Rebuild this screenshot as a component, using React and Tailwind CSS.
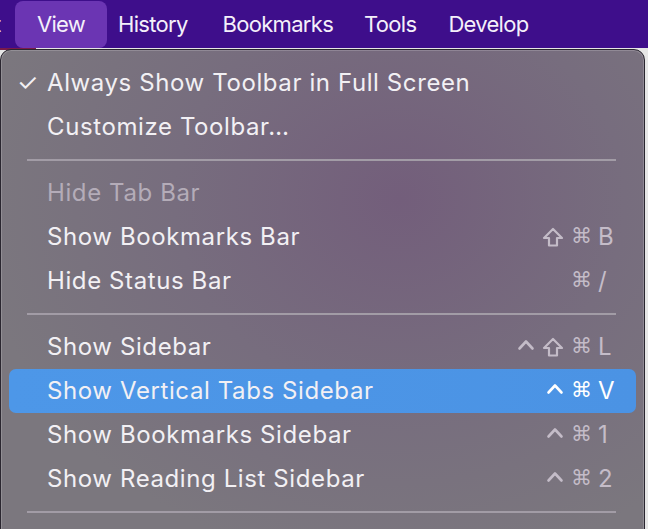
import React from "react";

const font = { fontFamily: "Inter, 'Noto Sans', 'DejaVu Sans', sans-serif" };
const sym = { fontFamily: "'DejaVu Sans', sans-serif" };

function ShiftIcon() {
  return (
    <svg width="22" height="20" viewBox="0 0 22 20" fill="none" stroke="currentColor" strokeWidth="2.2" strokeLinejoin="round">
      <path d="M11 2 L20 11 H15 V18.5 H7 V11 H2 Z" />
    </svg>
  );
}

function CaretIcon() {
  return (
    <svg width="18" height="20" viewBox="0 0 18 20" fill="none" stroke="currentColor" strokeWidth="2.6" strokeLinecap="round" strokeLinejoin="round">
      <path d="M2.5 11.5 L9 4.5 L15.5 11.5" />
    </svg>
  );
}

function Shortcut({ mods = [], k, active }) {
  return (
    <div className={`flex items-center ${active ? "text-white" : "text-[#c4bcc8]"}`}>
      <div className="flex items-center gap-[7px]">
        {mods.map((m, i) =>
          m === "^" ? (
            <CaretIcon key={i} />
          ) : m === "⇧" ? (
            <ShiftIcon key={i} />
          ) : (
            <span key={i} className="text-[21px]" style={sym}>
              {m}
            </span>
          )
        )}
      </div>
      <span className="w-[24px] pl-[6px] text-[24px]">{k}</span>
    </div>
  );
}

function Item({ label, check, disabled, active, sc }) {
  return (
    <div
      className={`h-[44px] mx-[8px] flex items-center rounded-[7px] ${
        active ? "bg-[linear-gradient(90deg,#4d97e8,#4b93e4)]" : ""
      }`}
    >
      <div className="w-[38px] pl-[8px] text-[24px] text-[#f2f0f4]">{check ? "✓" : ""}</div>
      <div
        className={`flex-1 text-[24px] tracking-[0.6px] ${
          disabled ? "text-[#b4acb8]" : "text-[#f2f0f4]"
        }`}
      >
        {label}
      </div>
      {sc && (
        <div className="pr-[20px]">
          <Shortcut {...sc} active={active} />
        </div>
      )}
    </div>
  );
}

function Sep() {
  return (
    <div className="h-[22px] flex items-center px-[26px] pr-[28px]">
      <div className="h-[2px] w-full bg-[#a29ca6]" />
    </div>
  );
}

export default function App() {
  return (
    <div className="w-[648px] h-[529px] overflow-hidden relative bg-[#e6e6e6]" style={font}>
      <div className="h-[48px] bg-[#3e0e8b] flex items-center text-[22px] tracking-[-0.7px] text-[#f4f0fa]">
        <span className="ml-[-6px] w-[21px]">t</span>
        <div className="h-[47px] w-[92px] rounded-[8px] bg-[#6b35b3] flex items-center justify-center">
          View
        </div>
        <span className="ml-[11px]">History</span>
        <span className="ml-[35px]">Bookmarks</span>
        <span className="ml-[31px]">Tools</span>
        <span className="ml-[32px]">Develop</span>
      </div>
      <div className="absolute left-0 top-[48px] h-[2px] w-[36px] bg-[#7a1a4a]" />
      <div className="absolute left-0 top-[49px] w-[645px] h-[500px] rounded-[11px] border border-[#2a2630] shadow-[inset_0_0_0_1px_rgba(255,255,255,0.18)] bg-[radial-gradient(ellipse_at_62%_30%,#735e7b_0%,#776d7e_40%,#7b777e_75%)]">
        <div className="pt-[11px]">
          <Item label="Always Show Toolbar in Full Screen" check />
          <Item label="Customize Toolbar…" />
          <Sep />
          <Item label="Hide Tab Bar" disabled />
          <Item label="Show Bookmarks Bar" sc={{ mods: ["⇧", "⌘"], k: "B" }} />
          <Item label="Hide Status Bar" sc={{ mods: ["⌘"], k: "/" }} />
          <Sep />
          <Item label="Show Sidebar" sc={{ mods: ["^", "⇧", "⌘"], k: "L" }} />
          <Item label="Show Vertical Tabs Sidebar" active sc={{ mods: ["^", "⌘"], k: "V" }} />
          <Item label="Show Bookmarks Sidebar" sc={{ mods: ["^", "⌘"], k: "1" }} />
          <Item label="Show Reading List Sidebar" sc={{ mods: ["^", "⌘"], k: "2" }} />
          <Sep />
        </div>
      </div>
    </div>
  );
}
